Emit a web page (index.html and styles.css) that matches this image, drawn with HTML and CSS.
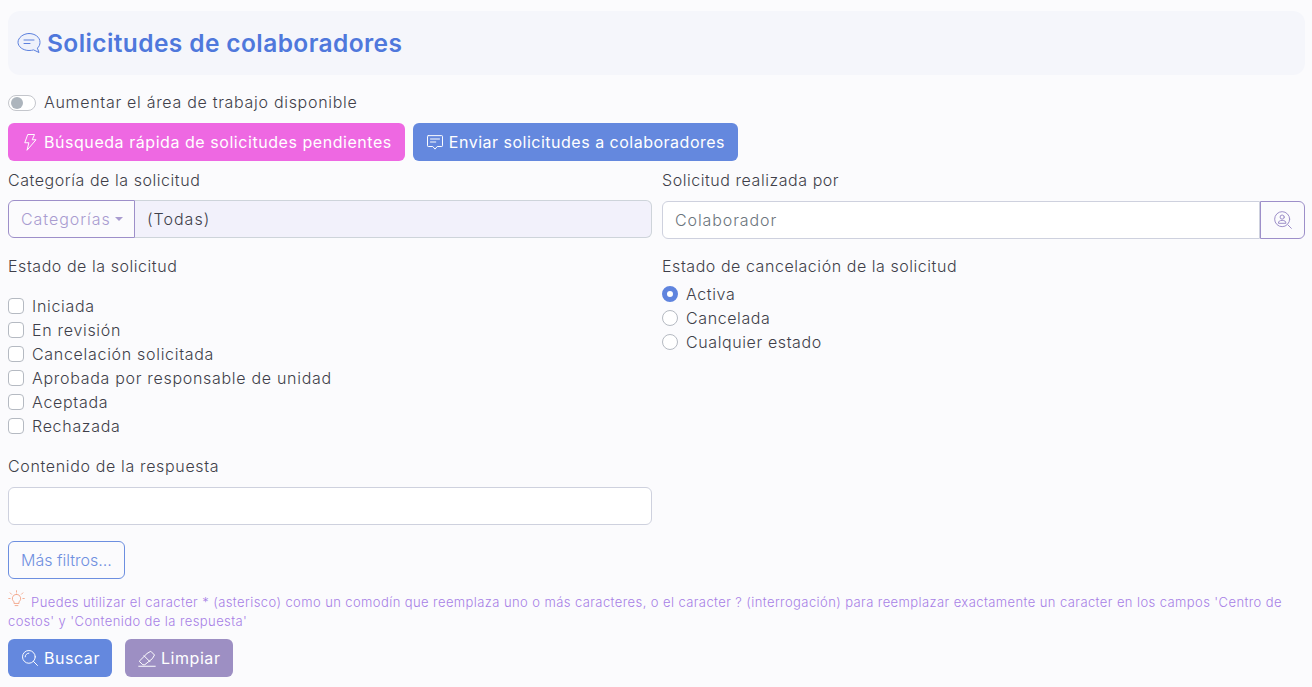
FILE: index.html
```html
<!DOCTYPE html>
<html lang="es">
<head>
    <meta charset="UTF-8">
    <meta name="viewport" content="width=device-width, initial-scale=1.0">
    <title>Solicitudes de colaboradores</title>
    <link rel="stylesheet" href="styles.css">
</head>
<body>
    <header class="page-header">
        <svg class="title-icon" viewBox="0 0 24 24" fill="none" stroke="#5b80de" stroke-width="1" stroke-linecap="round" stroke-linejoin="round"><path d="M12 2.500c6 0 11 3.600 11 8.800 0 2.400-1 4.400-2.600 5.800l1.600 4.400-5.400-2.600c-1.400.4-3 .6-4.600.6-6 0-11-3.800-11-8.200S6 2.500 12 2.500z" fill="#eef1fb"/><path d="M7 9h10M7 12.500h6"/></svg>
        <h1>Solicitudes de colaboradores</h1>
    </header>

    <label class="toggle-row">
        <span class="toggle"><span class="toggle-knob"></span></span>
        Aumentar el área de trabajo disponible
    </label>

    <div class="actions top-actions">
        <button class="btn btn-pink" type="button">
            <svg class="btn-icon" viewBox="0 0 24 24" fill="none" stroke="#fff" stroke-width="1.300" stroke-linejoin="round"><path d="M9 2h9l-3 7h5L8 23l2.500-10H5z"/></svg>
            Búsqueda rápida de solicitudes pendientes
        </button>
        <button class="btn btn-blue btn-send" type="button">
            <svg class="btn-icon" viewBox="0 0 24 24" fill="none" stroke="#fff" stroke-width="1.300" stroke-linecap="round" stroke-linejoin="round"><path d="M3 3.500h18a1 1 0 0 1 1 1V17a1 1 0 0 1-1 1h-6l-3 3.500L9 18H3a1 1 0 0 1-1-1V4.500a1 1 0 0 1 1-1z"/><path d="M6 8h12M6 12h7"/></svg>
            Enviar solicitudes a colaboradores
        </button>
    </div>

    <div class="filters">
        <div class="col">
            <p class="field-label">Categoría de la solicitud</p>
            <div class="input-group">
                <button class="btn-outline-purple" type="button">Categorías<span class="caret"></span></button>
                <div class="readonly-value">(Todas)</div>
            </div>

            <p class="field-label state-label">Estado de la solicitud</p>
            <ul class="check-list">
                <li><span class="checkbox"></span>Iniciada</li>
                <li><span class="checkbox"></span>En revisión</li>
                <li><span class="checkbox"></span>Cancelación solicitada</li>
                <li><span class="checkbox"></span>Aprobada por responsable de unidad</li>
                <li><span class="checkbox"></span>Aceptada</li>
                <li><span class="checkbox"></span>Rechazada</li>
            </ul>

            <p class="field-label answer-label">Contenido de la respuesta</p>
            <div class="text-input"></div>
        </div>

        <div class="col">
            <p class="field-label">Solicitud realizada por</p>
            <div class="input-group group-person">
                <div class="text-input placeholder">Colaborador</div>
                <button class="btn-person" type="button" aria-label="Buscar colaborador">
                    <svg viewBox="0 0 24 24" fill="none" stroke="#9d8fc9" stroke-width="1.200" stroke-linecap="round"><circle cx="11" cy="11" r="9"/><circle cx="11" cy="8.500" r="2.500"/><path d="M6.500 15.500c0-2 1.500-3 4.500-3s4.500 1 4.500 3z"/><path d="M18 18l4 4"/></svg>
                </button>
            </div>

            <p class="field-label state-label">Estado de cancelación de la solicitud</p>
            <ul class="radio-list">
                <li><span class="radio radio-on"></span>Activa</li>
                <li><span class="radio"></span>Cancelada</li>
                <li><span class="radio"></span>Cualquier estado</li>
            </ul>
        </div>
    </div>

    <button class="btn-more" type="button">Más filtros...</button>

    <p class="hint">
        <svg class="hint-icon" viewBox="0 0 24 24" fill="none" stroke="#f2a083" stroke-width="1.200" stroke-linecap="round" stroke-linejoin="round"><path d="M12 6a6 6 0 0 0-3.500 10.800V19h7v-2.200A6 6 0 0 0 12 6z"/><path d="M10 22h4M12 1v2M3 4l2 2M21 4l-2 2M1 12h2M21 12h2"/></svg>
        Puedes utilizar el caracter * (asterisco) como un comodín que reemplaza uno o más caracteres, o el caracter ? (interrogación) para reemplazar exactamente un caracter en los campos 'Centro de costos' y 'Contenido de la respuesta'
    </p>

    <div class="actions bottom-actions">
        <button class="btn btn-blue btn-search" type="button">
            <svg class="btn-icon" viewBox="0 0 24 24" fill="none" stroke="#fff" stroke-width="1.300" stroke-linecap="round"><circle cx="10.500" cy="10.500" r="8.500"/><path d="M16.500 16.500L22 22M5.500 10.500a5 5 0 0 1 5-5"/></svg>
            Buscar
        </button>
        <button class="btn btn-purple" type="button">
            <svg class="btn-icon" viewBox="0 0 24 24" fill="none" stroke="#fff" stroke-width="1.300" stroke-linecap="round" stroke-linejoin="round"><path d="M2 16l10-10 5-3 5 5-3 5-10 8H7z"/><path d="M8 9l8 8M1 23h22"/></svg>
            Limpiar
        </button>
    </div>
</body>
</html>
```

FILE: styles.css
```css
body {
    font-family: "Inter", "Liberation Sans", sans-serif;
    margin: 0;
    padding: 11px 7px 0 8px;
    background-color: #fbfbfd;
    color: #3f3f4a;
    font-size: 16px;
    font-weight: 300;
    letter-spacing: 0.55px;
    line-height: 24px;
}
p {
    margin: 0;
}
ul {
    list-style: none;
    margin: 0;
    padding: 0;
}
button {
    font-family: inherit;
    letter-spacing: inherit;
    cursor: pointer;
}
.page-header {
    display: flex;
    align-items: center;
    gap: 6px;
    height: 64px;
    padding-left: 9px;
    background-color: #f5f6fb;
    border-radius: 12px;
}
.title-icon {
    width: 24px;
    height: 24px;
}
.page-header h1 {
    margin: 0;
    font-size: 24.500px;
    font-weight: 600;
    color: #4f78dc;
    letter-spacing: 0.4px;
}
.toggle-row {
    display: flex;
    align-items: center;
    gap: 8px;
    margin-top: 15px;
    letter-spacing: 0.7px;
}
.toggle {
    display: flex;
    align-items: center;
    width: 28px;
    height: 16px;
    box-sizing: border-box;
    margin-top: 2px;
    padding-left: 2px;
    border: 1px solid #c4c6cc;
    border-radius: 8px;
    background-color: #fff;
}
.toggle-knob {
    width: 12px;
    height: 12px;
    border-radius: 50%;
    background-color: #adb5bd;
}
.actions {
    display: flex;
    gap: 8px;
}
.top-actions {
    margin-top: 9px;
}
.btn {
    display: flex;
    align-items: center;
    gap: 5px;
    height: 38px;
    padding: 0 13px;
    border: 0;
    border-radius: 6px;
    color: #fff;
    font-size: 16px;
    font-weight: 400;
}
.btn-send {
    letter-spacing: 0.5px;
}
.btn-search {
    padding-right: 12px;
}
.btn-icon {
    width: 18px;
    height: 18px;
}
.btn-pink {
    background-color: #ee68e2;
}
.btn-blue {
    background-color: #6488de;
}
.btn-purple {
    background-color: #9d8fc3;
}
.filters {
    display: grid;
    grid-template-columns: 644px 643px;
    gap: 10px;
    margin-top: 7px;
}
.field-label {
    height: 24px;
}
.input-group {
    display: flex;
    height: 38px;
    margin-top: 8px;
}
.group-person {
    margin-top: 9px;
}
.btn-outline-purple {
    display: flex;
    align-items: center;
    width: 127px;
    padding: 0 0 0 12px;
    border: 1px solid #9d8fc9;
    border-radius: 6px 0 0 6px;
    background: transparent;
    color: #a99cd0;
    font-size: 16px;
    font-weight: 300;
    letter-spacing: 0.95px;
}
.caret {
    margin-left: 4px;
    border-top: 4px solid #a99cd0;
    border-left: 4px solid transparent;
    border-right: 4px solid transparent;
}
.readonly-value {
    flex: 1;
    padding: 6px 12px;
    border: 1px solid #ced4da;
    border-left: 0;
    border-radius: 0 6px 6px 0;
    background-color: #f2f1fb;
    letter-spacing: 1px;
}
.text-input {
    height: 38px;
    box-sizing: border-box;
    padding: 6px 12px;
    border: 1px solid #ced1de;
    border-radius: 6px;
    background-color: #fff;
}
.placeholder {
    flex: 1;
    border-radius: 6px 0 0 6px;
    color: #6c757d;
    letter-spacing: 0.9px;
}
.btn-person {
    display: flex;
    align-items: center;
    justify-content: center;
    width: 45px;
    padding: 0;
    border: 1px solid #9d8fc9;
    border-radius: 0 6px 6px 0;
    background: transparent;
}
.btn-person svg {
    width: 20px;
    height: 20px;
}
.state-label {
    margin-top: 16px;
}
.group-person + .state-label {
    margin-top: 15px;
}
.check-list {
    margin-top: 16px;
    letter-spacing: 0.7px;
}
.radio-list {
    margin-top: 4px;
    letter-spacing: 0.6px;
}
.check-list li,
.radio-list li {
    display: flex;
    align-items: center;
    gap: 8px;
    height: 24px;
}
.checkbox,
.radio {
    width: 16px;
    height: 16px;
    box-sizing: border-box;
    border: 1px solid #b5bac2;
    background-color: #fff;
}
.checkbox {
    border-radius: 4px;
}
.radio {
    border-radius: 50%;
}
.radio-on {
    border: 5px solid #5f84de;
}
.answer-label {
    margin-top: 16px;
    letter-spacing: 0.65px;
}
.answer-label + .text-input {
    margin-top: 9px;
}
.btn-more {
    display: block;
    height: 38px;
    margin-top: 16px;
    padding: 0 12px;
    border: 1px solid #6d8fe0;
    border-radius: 6px;
    background: transparent;
    color: #6f8fe0;
    font-size: 16px;
    font-weight: 300;
    letter-spacing: 0;
}
.hint {
    margin-top: 11px;
    color: #a77fe6;
    font-size: 13px;
    letter-spacing: 0.41px;
    line-height: 19px;
}
.hint-icon {
    width: 17px;
    height: 17px;
    margin-right: 2px;
}
.bottom-actions {
    gap: 13px;
    margin-top: 8px;
}
```
